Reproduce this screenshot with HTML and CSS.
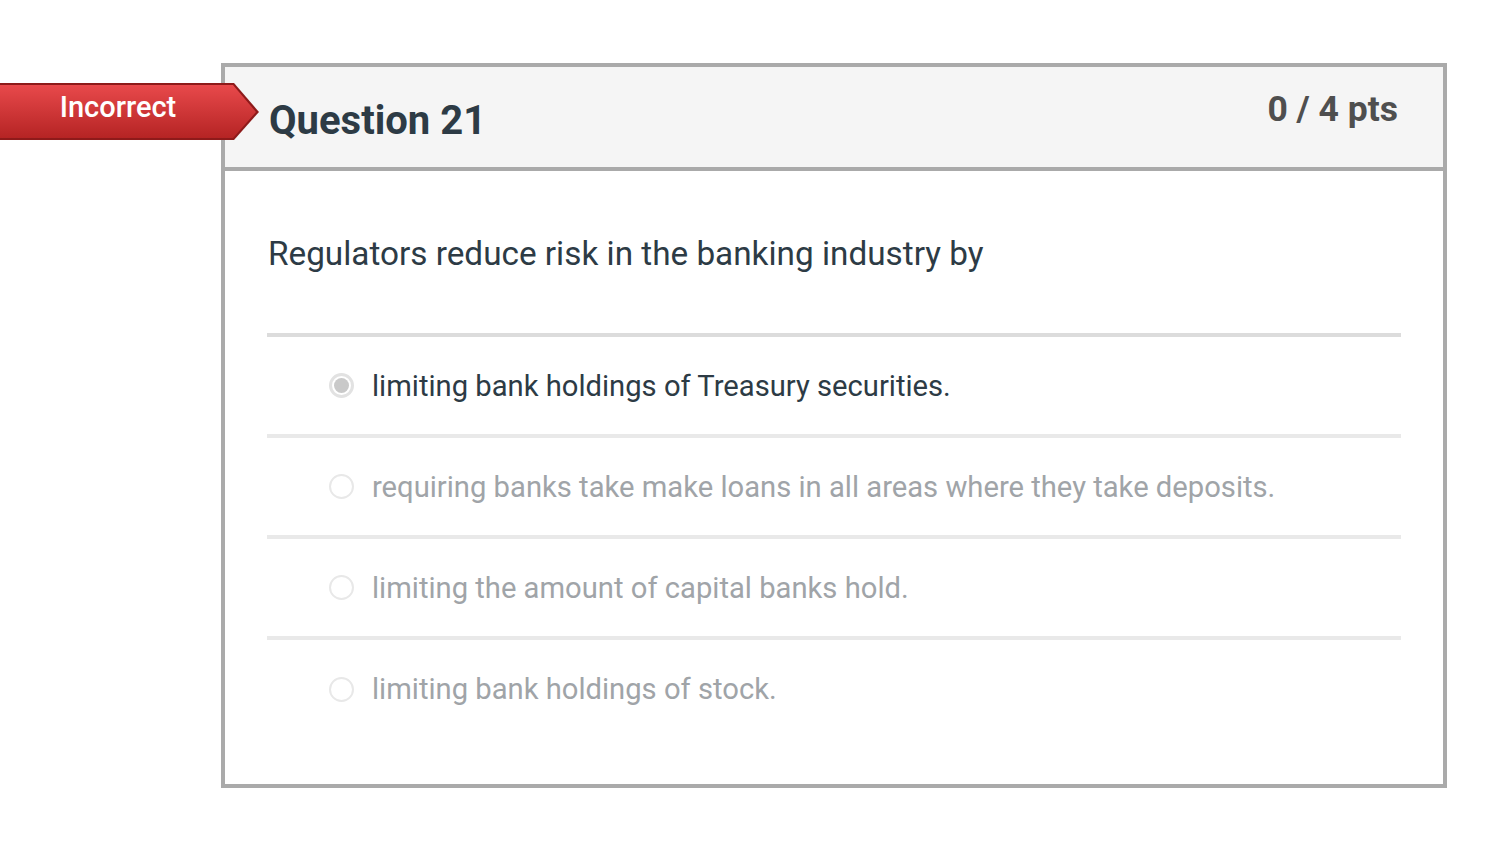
FILE: index.html
```html
<!DOCTYPE html>
<html>
<head>
<meta charset="utf-8">
<link rel="stylesheet" href="styles.css">
</head>
<body>
<div class="page">
  <div class="flag">
    <svg class="flag-shape" width="260" height="58" viewBox="0 0 260 58">
      <defs>
        <linearGradient id="fg" x1="0" y1="0" x2="0" y2="1">
          <stop offset="0" stop-color="#e8494b"/>
          <stop offset="1" stop-color="#b52424"/>
        </linearGradient>
      </defs>
      <polygon points="0,0 234,0 259,29 234,57 0,57" fill="#8e1a1a"/>
      <polygon points="0,2 233,2 256,29 233,55 0,55" fill="url(#fg)"/>
    </svg>
    <span class="flag-text">Incorrect</span>
  </div>
  <div class="card">
    <div class="card-header">
      <h2 class="q-title">Question 21</h2>
      <div class="q-points">0 / 4 pts</div>
    </div>
    <div class="card-body">
      <p class="q-text">Regulators reduce risk in the banking industry by</p>
      <div class="answers">
        <div class="answer selected"><span class="radio checked"></span><span class="a-text">limiting bank holdings of Treasury securities.</span></div>
        <div class="answer"><span class="radio"></span><span class="a-text">requiring banks take make loans in all areas where they take deposits.</span></div>
        <div class="answer"><span class="radio"></span><span class="a-text">limiting the amount of capital banks hold.</span></div>
        <div class="answer"><span class="radio"></span><span class="a-text">limiting bank holdings of stock.</span></div>
      </div>
    </div>
  </div>
</div>
</body>
</html>
```
FILE: styles.css
```css
* { box-sizing: border-box; }
html, body { margin: 0; padding: 0; background: #fff; }
body { font-family: Roboto, "Liberation Sans", sans-serif; color: #2d3b45; }
.page { position: relative; padding: 63px 0 0 221px; }
.flag { position: absolute; left: 0; top: 83px; width: 260px; height: 58px; z-index: 2; }
.flag-shape { display: block; }
.flag-text { position: absolute; left: 0; top: 0; width: 236px; height: 57px; display: flex; align-items: center; justify-content: center; color: #fff; font-size: 29px; font-weight: 500; padding-bottom: 9px; }
.card { width: 1226px; height: 725px; border: 4px solid #aaaaaa; background: #fff; }
.card-header { height: 104px; background: #f5f5f5; border-bottom: 4px solid #aaaaaa; display: flex; justify-content: space-between; padding: 0 45px 0 44px; }
.q-title { margin: 0; font-size: 40px; font-weight: 700; line-height: 1; padding-top: 34px; color: #2d3b45; }
.q-points { font-size: 35.5px; font-weight: 700; color: #4f4f4f; line-height: 1; padding-top: 25px; }
.card-body { padding: 0 42px; }
.q-text { margin: 0; font-size: 33.3px; line-height: 1; padding: 66px 0 0 1px; height: 162px; }
.answers { border-top: 4px solid #dcdcdc; }
.answer { display: flex; align-items: center; height: 101px; border-bottom: 4px solid #e9e9e9; padding-left: 62px; font-size: 29.2px; color: #a0a4a8; }
.answer:last-child { border-bottom: none; height: 98px; }
.answer.selected { color: #2d3b45; }
.radio { width: 25px; height: 25px; border-radius: 50%; border: 2px solid #e8e8e8; background: #fff; margin-right: 18px; flex: none; display: flex; align-items: center; justify-content: center; }
.radio.checked { border: 3px solid #e2e2e2; }
.radio.checked::after { content: ""; width: 15px; height: 15px; border-radius: 50%; background: #c9c9c9; }
```
